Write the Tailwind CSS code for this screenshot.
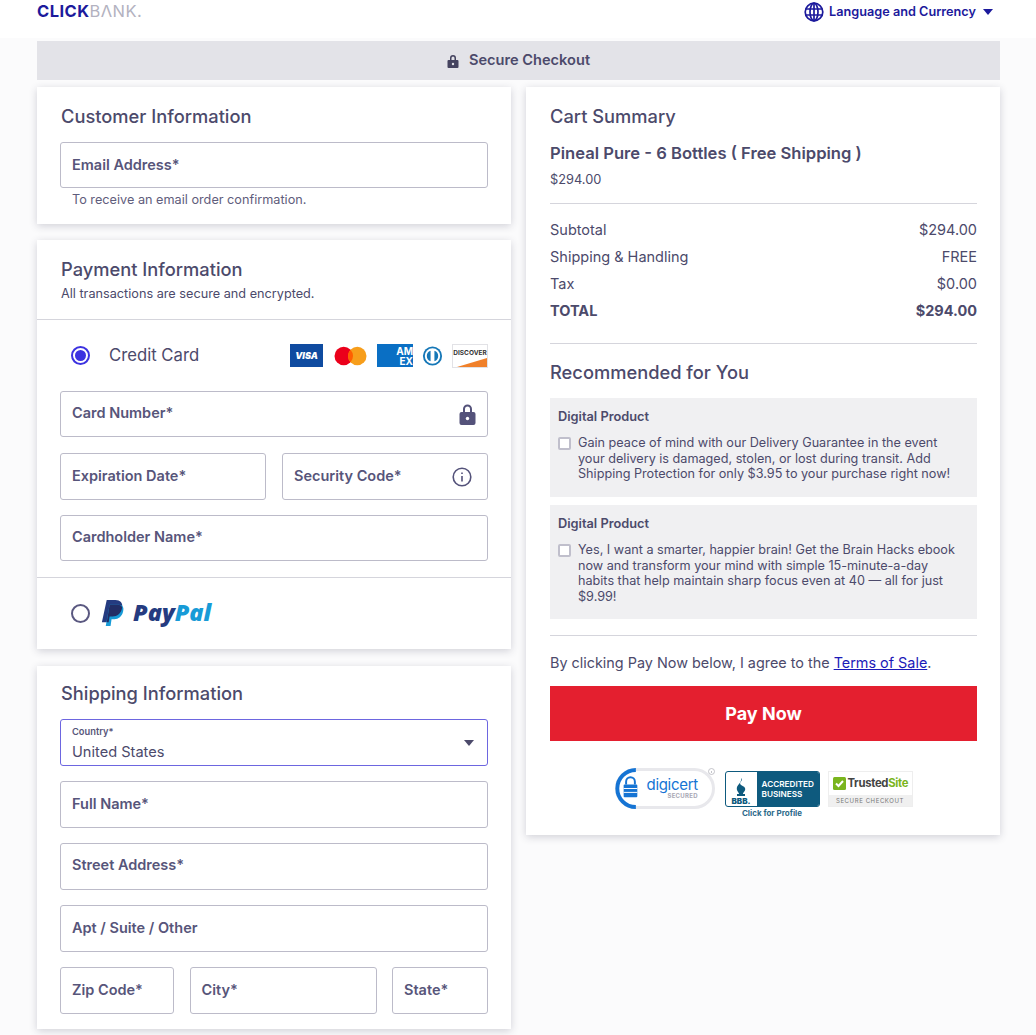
<!DOCTYPE html>
<html lang="en"><head><meta charset="utf-8"><title>Checkout</title>
<script src="https://cdn.jsdelivr.net/npm/@tailwindcss/browser@4"></script></head>
<body class="bg-[#fbfbfc] font-['Inter','Noto_Sans',sans-serif] text-[#4c4a6b] h-[1035px] overflow-hidden">
<header class="h-[38px] bg-white px-[37px] flex justify-between">
  <div class="text-[16.500px] leading-[23px] tracking-[0.45px]"><span class="font-bold text-[#1c1a9c]">CLICK</span><span class="font-normal text-[#b3b2c0]">BΛNK.</span></div>
  <div class="flex items-center h-[24px] gap-[5px] text-[12.700px] font-semibold text-[#1c1a9c] pr-[6px]">
    <svg class="w-[20px] h-[20px]" viewBox="0 0 20 20" fill="none" stroke="#1c1a9c" stroke-width="1.7"><circle cx="10" cy="10" r="8.8"/><ellipse cx="10" cy="10" rx="4" ry="8.8"/><path d="M1.500 7h17M1.500 13h17M10 1v18"/></svg>
    <span>Language and Currency</span>
    <svg class="w-[10px] h-[6px] ml-[2px]" viewBox="0 0 10 6"><path d="M0 0h10L5 6z" fill="#1c1a9c"/></svg>
  </div>
</header>
<div class="mx-[37px] w-[963px] h-[39px] mt-[3px] bg-[#e3e3e8] flex items-center justify-center gap-[10px] text-[14.600px] font-semibold">
  <svg class="w-[12px] h-[14px]" viewBox="0 0 12 14"><path d="M3 6V4a3 3 0 0 1 6 0v2h1.500a1 1 0 0 1 1 1v6a1 1 0 0 1-1 1h-9a1 1 0 0 1-1-1V7a1 1 0 0 1 1-1zm1.500 0h3V4a1.500 1.500 0 0 0-3 0z" fill="#45435f"/><circle cx="6" cy="10" r="1.200" fill="#e3e3e8"/></svg>
  <span>Secure Checkout</span>
</div>
<main class="mx-[37px] mt-[7px] w-[963px] flex gap-[15px] items-start">
  <div class="w-[474px] flex flex-col gap-[16px]">
    <section class="bg-white shadow-[0_2px_8px_rgba(40,40,70,0.2)] h-[137px] px-[23px] pt-[15px]">
      <h2 class="text-[18.300px] leading-[28px] font-medium mb-[12px] pl-[1px]">Customer Information</h2>
      <div class="h-[46px] border border-[#bcbbc9] rounded-[3px] flex items-center px-[11px] text-[14.500px] font-semibold text-[#57557a] pb-[1px]">Email Address*</div>
      <p class="text-[12.700px] leading-[18px] mt-[3px] pl-[12px] text-[#5f5d7c]">To receive an email order confirmation.</p>
    </section>
    <section class="bg-white shadow-[0_2px_8px_rgba(40,40,70,0.2)] h-[409px]">
      <div class="px-[24px] pt-[15px] h-[80px] border-b border-[#d5d5dc]">
        <h2 class="text-[18.300px] leading-[28px] font-medium">Payment Information</h2>
        <p class="text-[12.700px] leading-[18px] mt-[2px]">All transactions are secure and encrypted.</p>
      </div>
      <div class="px-[23px]">
        <div class="h-[71px] flex items-center">
          <span class="ml-[11px] w-[19px] h-[19px] rounded-full border-2 border-[#3c32e0] flex items-center justify-center"><span class="w-[11px] h-[11px] rounded-full bg-[#3c32e0]"></span></span>
          <span class="ml-[19px] text-[16.700px]">Credit Card</span>
          <div class="ml-auto flex items-center">
            <span class="w-[33px] h-[23px] bg-[#0f4ba0] text-white text-[9px] font-black italic flex items-center justify-center">VISA</span>
            <svg class="w-[33px] h-[20px] ml-[11px]" viewBox="0 0 34 20"><circle cx="10" cy="10" r="9.500" fill="#eb001b"/><circle cx="24" cy="10" r="9.500" fill="#f79e1b"/><path d="M17 3.500a9.500 9.500 0 0 1 0 13 9.500 9.500 0 0 1 0-13z" fill="#ff5f00"/></svg>
            <span class="w-[36px] h-[23px] ml-[10px] bg-[#0a6fc4] text-white text-[10px] leading-[10px] font-bold flex flex-col items-end justify-center overflow-hidden"><span>AM</span><span>EX</span></span>
            <svg class="w-[23px] h-[20px] ml-[8px]" viewBox="0 0 24 20" fill="none"><circle cx="12" cy="10" r="10" fill="#1577b7"/><circle cx="12" cy="10" r="8" fill="#fff"/><path d="M10 4.500v11a5.800 5.800 0 0 1 0-11zM14 4.500v11a5.800 5.800 0 0 0 0-11z" fill="#1577b7"/></svg>
            <span class="relative w-[36px] h-[24px] ml-[8px] border border-[#e2e2e6] bg-white overflow-hidden text-[6.500px] font-bold text-[#333] flex items-center justify-center"><span class="absolute right-0 bottom-0 w-0 h-0 border-l-[30px] border-l-transparent border-b-[9px] border-b-[#f0802a]"></span><span class="relative -mt-[4px]">DISCOVER</span></span>
          </div>
        </div>
        <div class="flex flex-col gap-[16px]">
          <div class="h-[46px] border border-[#bcbbc9] rounded-[3px] flex items-center justify-between px-[11px] text-[14.500px] font-semibold text-[#57557a] pb-[3px]">Card Number*
            <svg class="w-[17px] h-[21px] mt-[3px]" viewBox="0 0 17 21"><path d="M4 8V5a4.500 4.500 0 0 1 9 0v3h1.500a2 2 0 0 1 2 2v9a2 2 0 0 1-2 2h-12a2 2 0 0 1-2-2v-9a2 2 0 0 1 2-2zm2 0h5V5a2.500 2.500 0 0 0-5 0z" fill="#54527a"/><circle cx="8.500" cy="14.500" r="1.700" fill="#fff"/></svg>
          </div>
          <div class="grid grid-cols-[206px_206px] gap-[16px]">
            <div class="h-[47px] border border-[#bcbbc9] rounded-[3px] flex items-center px-[11px] text-[14.500px] font-semibold text-[#57557a] pb-[2px]">Expiration Date*</div>
            <div class="h-[47px] border border-[#bcbbc9] rounded-[3px] flex items-center justify-between px-[11px] text-[14.500px] font-semibold text-[#57557a] pb-[2px]">Security Code*
              <svg class="w-[20px] h-[20px] mr-[4px] mt-[2px]" viewBox="0 0 20 20" fill="none" stroke="#54527a" stroke-width="1.600"><circle cx="10" cy="10" r="8.800"/><path d="M10 9v5.500M10 5.500v1.500"/></svg>
            </div>
          </div>
          <div class="h-[46px] -mt-[1px] border border-[#bcbbc9] rounded-[3px] flex items-center px-[11px] text-[14.500px] font-semibold text-[#57557a] pb-[3px]">Cardholder Name*</div>
        </div>
      </div>
      <div class="mt-[16px] border-t border-[#d5d5dc] h-[71px] flex items-center pl-[34px]">
        <span class="w-[19px] h-[19px] rounded-full border-2 border-[#5a5880]"></span>
        <svg class="w-[25px] h-[27px] ml-[10px]" viewBox="0 0 24 28"><path d="M6 0h9c5 0 8 3 7 8-1 6-5 9-10 9H9l-1 6H1z" fill="#253b80"/><path d="M9 5h9c5 0 6 3 5 7-1 5-5 8-9 8h-3l-1 7H5z" fill="#179bd7"/><path d="M9 5h8c3 0 5 1 5 3-1 6-5 9-10 9H9l-1 6H6z" fill="#222d65"/></svg>
        <span class="ml-[8px] text-[23.500px] leading-none font-extrabold italic text-[#253b80] font-['Open_Sans',sans-serif]">Pay<span class="text-[#179bd7]">Pal</span></span>
      </div>
    </section>
    <section class="mt-[1px] bg-white shadow-[0_2px_8px_rgba(40,40,70,0.2)] h-[363px] px-[23px] pt-[13px]">
      <h2 class="text-[18.300px] leading-[28px] font-medium mb-[12px] pl-[1px]">Shipping Information</h2>
      <div class="flex flex-col gap-[16px]">
        <div class="relative h-[47px] border border-[#6d66e0] rounded-[3px] px-[11px] pt-[6px]">
          <div class="text-[9.300px] leading-[12px] font-semibold text-[#57557a]">Country*</div>
          <div class="text-[14.600px] leading-[20px] mt-[4px]">United States</div>
          <svg class="absolute right-[13px] top-[20px] w-[10px] h-[6px]" viewBox="0 0 10 6"><path d="M0 0h10L5 6z" fill="#4c4a6b"/></svg>
        </div>
        <div class="-mt-[1px] h-[47px] border border-[#bcbbc9] rounded-[3px] flex items-center px-[11px] text-[14.500px] font-semibold text-[#57557a] pb-[2px]">Full Name*</div>
        <div class="-mt-[1px] h-[47px] border border-[#bcbbc9] rounded-[3px] flex items-center px-[11px] text-[14.500px] font-semibold text-[#57557a] pb-[3px]">Street Address*</div>
        <div class="-mt-[1px] h-[47px] border border-[#bcbbc9] rounded-[3px] flex items-center px-[11px] text-[14.500px] font-semibold text-[#57557a] pb-[2px]">Apt / Suite / Other</div>
        <div class="-mt-[1px] grid grid-cols-[114px_187px_96px] gap-[15.500px]">
          <div class="h-[47px] border border-[#bcbbc9] rounded-[3px] flex items-center px-[11px] text-[14.500px] font-semibold text-[#57557a] pb-[2px]">Zip Code*</div>
          <div class="h-[47px] border border-[#bcbbc9] rounded-[3px] flex items-center px-[11px] text-[14.500px] font-semibold text-[#57557a] pb-[2px]">City*</div>
          <div class="h-[47px] border border-[#bcbbc9] rounded-[3px] flex items-center px-[11px] text-[14.500px] font-semibold text-[#57557a] pb-[2px]">State*</div>
        </div>
      </div>
    </section>
  </div>
  <aside class="w-[474px] h-[748px] bg-white shadow-[0_2px_8px_rgba(40,40,70,0.2)] pl-[24px] pr-[23px] pt-[15px]">
    <h2 class="text-[18.300px] leading-[28px] font-medium">Cart Summary</h2>
    <h3 class="text-[16.600px] leading-[24px] font-semibold mt-[11px]">Pineal Pure - 6 Bottles ( Free Shipping )</h3>
    <p class="text-[12.800px] leading-[18px] mt-[6px]">$294.00</p>
    <div class="border-t border-[#d5d5dc] mt-[14px] pt-[12px] pb-[19px] text-[14.500px] leading-[27px]">
      <div class="flex justify-between"><span>Subtotal</span><span>$294.00</span></div>
      <div class="flex justify-between"><span>Shipping &amp; Handling</span><span>FREE</span></div>
      <div class="flex justify-between"><span>Tax</span><span>$0.00</span></div>
      <div class="flex justify-between font-bold"><span>TOTAL</span><span>$294.00</span></div>
    </div>
    <div class="border-t border-[#d5d5dc] pt-[14px]">
      <h2 class="text-[18.300px] leading-[28px] font-medium">Recommended for You</h2>
      <div class="mt-[12px] h-[99px] bg-[#f0f0f2] pl-[8px] pr-[8px] pt-[11px]">
        <div class="text-[12.800px] leading-[16px] font-semibold">Digital Product</div>
        <div class="flex mt-[10px] gap-[7px] text-[12.650px] leading-[15.500px]">
          <span class="w-[13px] h-[13px] mt-[2px] shrink-0 border-2 border-[#c0bfcc] rounded-[2px] bg-white"></span>
          <p class="w-[380px]">Gain peace of mind with our Delivery Guarantee in the event your delivery is damaged, stolen, or lost during transit. Add Shipping Protection for only $3.95 to your purchase right now!</p>
        </div>
      </div>
      <div class="mt-[8px] h-[114px] bg-[#f0f0f2] pl-[8px] pr-[8px] pt-[11px]">
        <div class="text-[12.800px] leading-[16px] font-semibold">Digital Product</div>
        <div class="flex mt-[10px] gap-[7px] text-[12.650px] leading-[15.500px]">
          <span class="w-[13px] h-[13px] mt-[2px] shrink-0 border-2 border-[#c0bfcc] rounded-[2px] bg-white"></span>
          <p class="w-[380px]">Yes, I want a smarter, happier brain! Get the Brain Hacks ebook now and transform your mind with simple 15-minute-a-day habits that help maintain sharp focus even at 40 — all for just $9.99!</p>
        </div>
      </div>
    </div>
    <div class="border-t border-[#d5d5dc] mt-[16px] pt-[16px] text-[14.400px] leading-[21px]">By clicking Pay Now below, I agree to the <a class="underline text-[#1c1ab8]">Terms of Sale</a>.</div>
    <div class="mt-[13px] h-[55px] bg-[#e41f2f] text-white text-[18px] font-bold flex items-center justify-center">Pay Now</div>
    <div class="mt-[27px] flex justify-center items-start">
      <div class="relative w-[100px] h-[41px] rounded-full border-[3px] border-[#e8e8ec] flex items-center">
        <svg class="absolute -left-[3px] -top-[3px] w-[30px] h-[41px]" viewBox="0 0 30 42" fill="none"><path d="M21 2A19 19 0 0 0 21 40" stroke="#1574d4" stroke-width="4"/><path d="M11 17v-3a4.500 4.500 0 0 1 9 0v3" stroke="#1574d4" stroke-width="2"/><rect x="8.500" y="17" width="14" height="13" rx="1" fill="#1574d4"/><path d="M8.500 21h14M8.500 25h14" stroke="#fff"/></svg>
        <div class="ml-[29px] leading-none text-right">
          <div class="text-[15px] leading-[14px] text-[#1574d4] tracking-[-0.3px]">digicert</div>
          <div class="text-[6px] leading-[8px] font-bold text-[#a8a8b4] tracking-[0.3px]">SECURED</div>
        </div>
        <svg class="absolute -right-[3px] -top-[3px] w-[7px] h-[7px]" viewBox="0 0 7 7" fill="none" stroke="#b5b5bd" stroke-width="0.8"><circle cx="3.500" cy="3.500" r="3"/><path d="M3.500 3v2"/></svg>
      </div>
      <div class="ml-[10px] w-[95px] mt-[3px]">
        <div class="h-[36px] rounded-[3px] border border-[#0e5a7e] flex overflow-hidden">
          <div class="w-[31px] flex flex-col items-center justify-end text-[#0e5a7e] text-[8px] leading-[10px] font-black"><svg class="w-[12px] h-[18px]" viewBox="0 0 12 18"><path d="M6 0c3 3-3 4 0 7 1 1 3 1 4 3 1 3-2 4-2 6h2v2H2v-2h2c0-2-3-3-2-7 1-3 5-5 4-9z" fill="#0e5a7e"/></svg><span>BBB.</span></div>
          <div class="flex-1 bg-[#0e5a7e] text-white text-[8.200px] leading-[10px] font-semibold pl-[5px] flex flex-col justify-center whitespace-nowrap"><span>ACCREDITED</span><span>BUSINESS</span></div>
        </div>
        <div class="text-[8px] leading-[12px] font-bold text-[#2d6a8a] text-center">Click for Profile</div>
      </div>
      <div class="ml-[8px] w-[85px] h-[36px] mt-[3px] bg-white border border-[#eee] flex flex-col">
        <div class="h-[23px] flex items-center pl-[4px] gap-[2px] text-[11.300px] font-bold text-[#444]">
          <svg class="w-[13px] h-[13px] shrink-0" viewBox="0 0 13 13"><rect width="13" height="13" rx="1.500" fill="#7ab51d"/><path d="M3 6.500l2.500 2.500L10 4" stroke="#fff" stroke-width="2" fill="none"/></svg>
          <span class="tracking-[-0.3px]">Trusted<span class="text-[#7ab51d]">Site</span></span>
        </div>
        <div class="flex-1 bg-[#f0f0f0] text-[6px] tracking-[0.6px] text-[#777] flex items-center justify-center whitespace-nowrap">SECURE CHECKOUT</div>
      </div>
    </div>
  </aside>
</main>
</body></html>
